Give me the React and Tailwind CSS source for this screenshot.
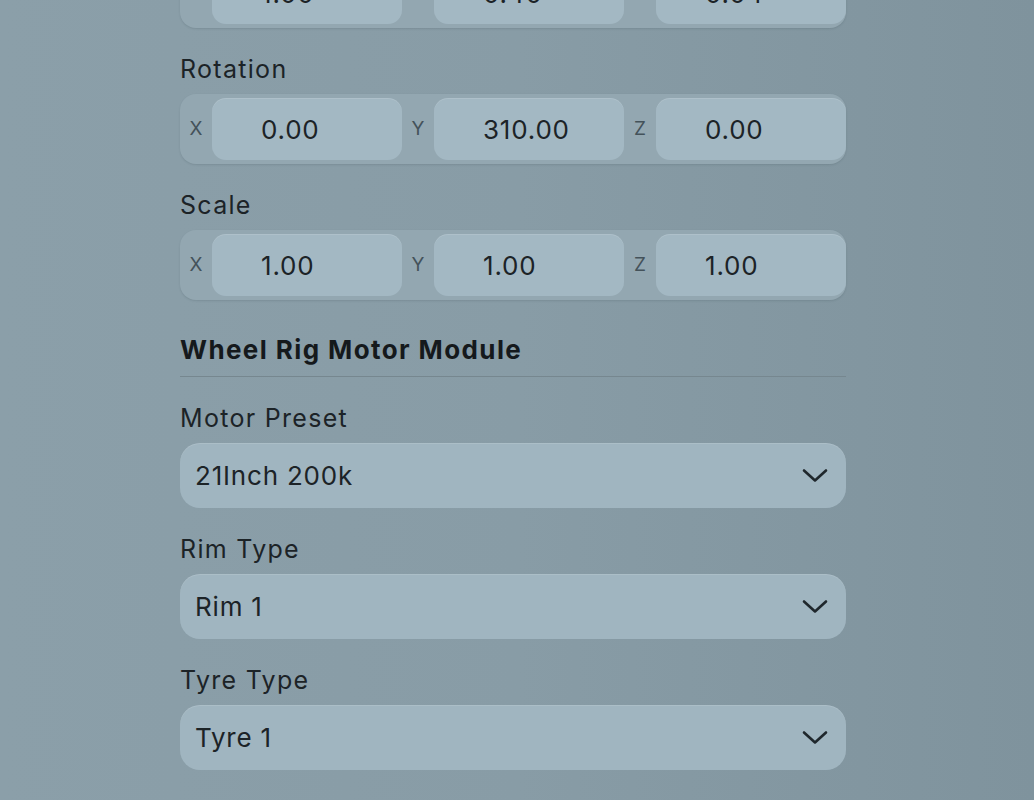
import React from 'react';

const font = { fontFamily: 'Inter, "Noto Sans", sans-serif' };

function Chevron() {
  return (
    <svg width="26" height="15" viewBox="0 0 26 15" fill="none" className="text-[#1f272c]">
      <path d="M2 2.5 13 12.5 24 2.5" stroke="currentColor" strokeWidth="2.6" strokeLinecap="round" strokeLinejoin="round" />
    </svg>
  );
}

function VectorField({ label, values }) {
  return (
    <div className="mt-6 first:mt-0">
      <div className="h-8 translate-y-[1px] leading-8 text-[25px] tracking-[1.3px] text-[#1c2327]">{label}</div>
      <div className="mt-[10px] flex h-[70px] items-stretch rounded-[16px] bg-[#93a7b1] py-1 shadow-[0_1px_2px_rgba(40,60,70,0.15)]">
        {values.map(([axis, value]) => (
          <div key={axis} className="flex flex-1 items-stretch">
            <span className="flex w-8 shrink-0 items-center justify-center text-[19px] text-[#44525a]">{axis}</span>
            <div className="flex flex-1 items-center rounded-[14px] bg-[#a3b8c3] pl-[49px] text-[26px] tracking-[0.8px] text-[#1c2327] shadow-[inset_0_1px_0_rgba(255,255,255,0.12)]">
              {value}
            </div>
          </div>
        ))}
      </div>
    </div>
  );
}

function SelectField({ label, value }) {
  return (
    <div className="mt-6">
      <div className="h-8 translate-y-[1px] leading-8 text-[25px] tracking-[1.3px] text-[#1c2327]">{label}</div>
      <div className="mt-[10px] flex h-[65px] items-center justify-between rounded-[20px] bg-[#a0b5c0] pl-[15px] pr-[18px] shadow-[inset_0_1px_0_rgba(255,255,255,0.12)]">
        <span className="text-[26px] tracking-[0.8px] text-[#1c2327]">{value}</span>
        <Chevron />
      </div>
    </div>
  );
}

export default function App() {
  return (
    <div
      className="h-[800px] w-full overflow-hidden bg-gradient-to-r from-[#8b9fa9] via-[#889ca6] to-[#7f939d]"
      style={font}
    >
      <div className="mx-auto -mt-[84px] w-[666px] translate-x-[-4px]">
        <VectorField label="Position" values={[['X', '1.00'], ['Y', '0.40'], ['Z', '0.04']]} />
        <VectorField label="Rotation" values={[['X', '0.00'], ['Y', '310.00'], ['Z', '0.00']]} />
        <VectorField label="Scale" values={[['X', '1.00'], ['Y', '1.00'], ['Z', '1.00']]} />

        <div className="mt-8 border-b border-[#76878f] pb-3">
          <h2 className="h-8 translate-y-[2px] leading-8 text-[26px] font-bold tracking-[1.4px] text-[#15191c]">Wheel Rig Motor Module</h2>
        </div>

        <SelectField label="Motor Preset" value="21Inch 200k" />
        <SelectField label="Rim Type" value="Rim 1" />
        <SelectField label="Tyre Type" value="Tyre 1" />
      </div>
    </div>
  );
}
